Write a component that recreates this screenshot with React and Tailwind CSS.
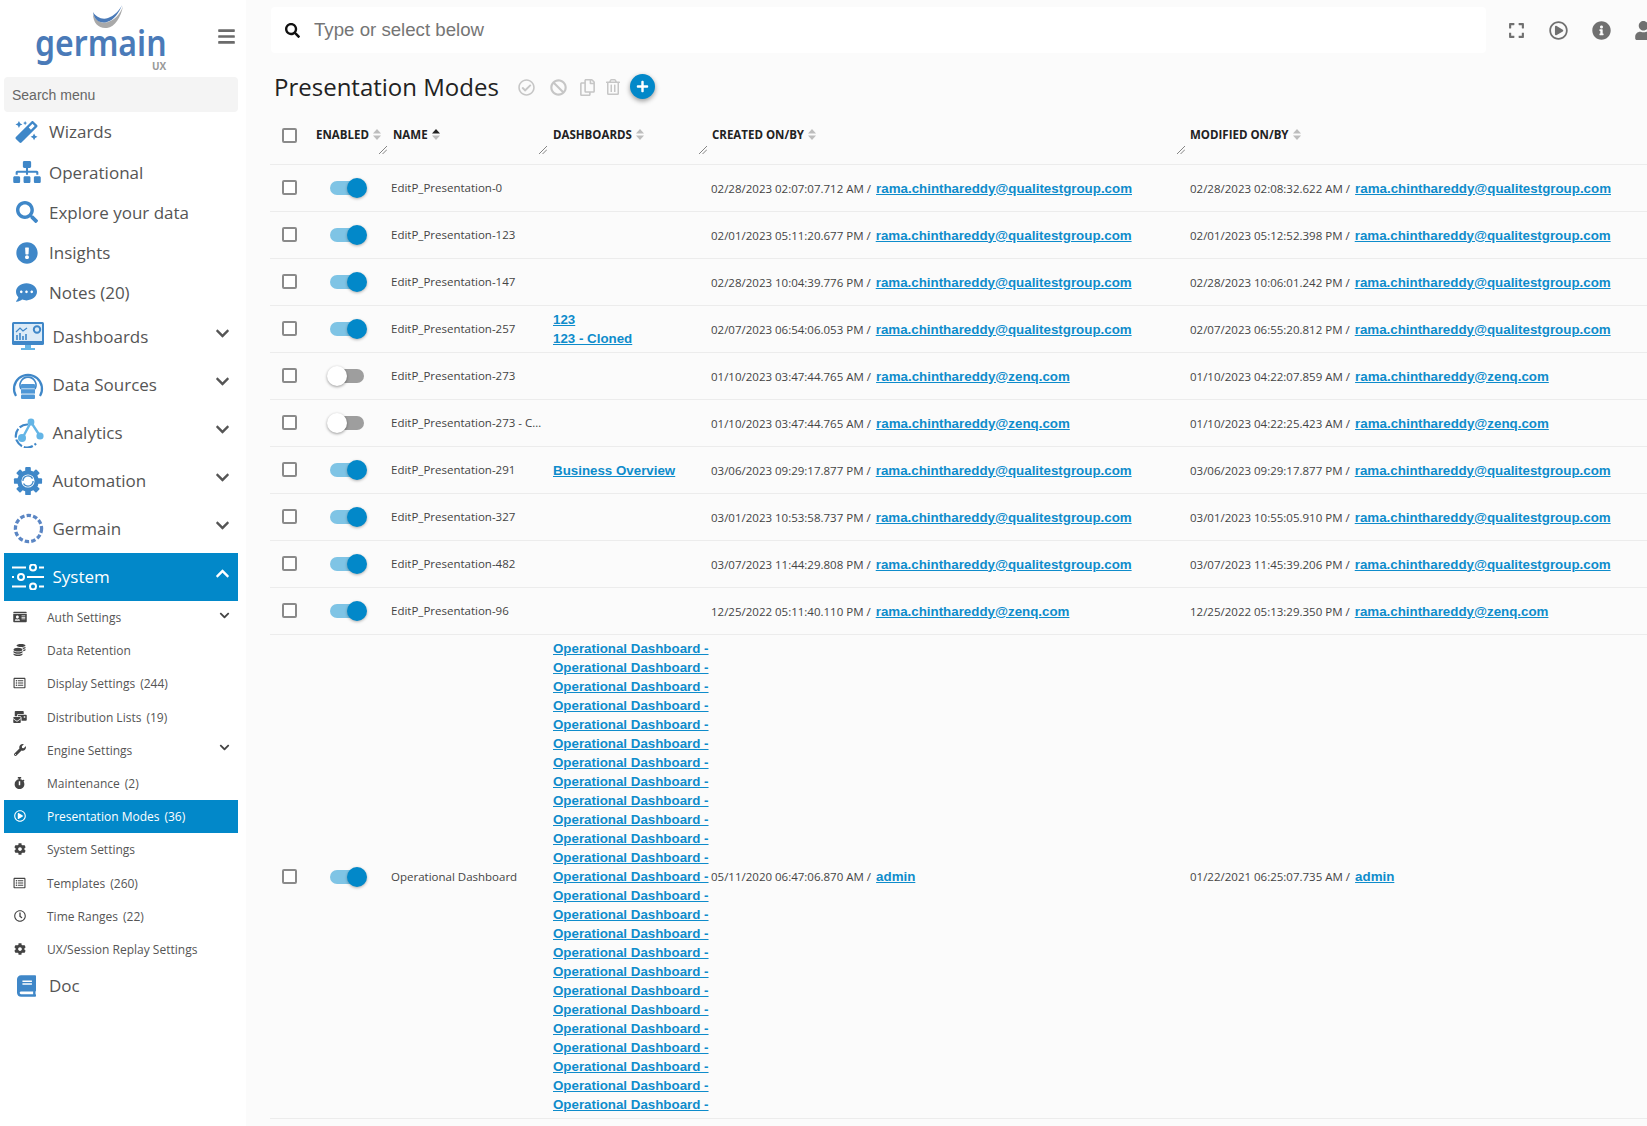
import React from "react";
import {
  FaMagic, FaSitemap, FaSearch, FaExclamationCircle, FaCommentDots, FaBook, FaIdCard, FaCoins, FaRegListAlt,
  FaMailBulk, FaWrench, FaStopwatch, FaRegPlayCircle, FaCog, FaRegClock, FaChevronDown, FaChevronUp,
  FaExpand, FaInfoCircle, FaUser, FaRegCheckCircle, FaBan, FaRegCopy, FaRegTrashAlt, FaPlus, FaBars,
} from "react-icons/fa";

const Q = "rama.chinthareddy@qualitestgroup.com";
const Z = "rama.chinthareddy@zenq.com";

const rows = [
  { name: "EditP_Presentation-0", on: true, c: "02/28/2023 02:07:07.712 AM", cb: Q, m: "02/28/2023 02:08:32.622 AM", mb: Q, d: [] },
  { name: "EditP_Presentation-123", on: true, c: "02/01/2023 05:11:20.677 PM", cb: Q, m: "02/01/2023 05:12:52.398 PM", mb: Q, d: [] },
  { name: "EditP_Presentation-147", on: true, c: "02/28/2023 10:04:39.776 PM", cb: Q, m: "02/28/2023 10:06:01.242 PM", mb: Q, d: [] },
  { name: "EditP_Presentation-257", on: true, c: "02/07/2023 06:54:06.053 PM", cb: Q, m: "02/07/2023 06:55:20.812 PM", mb: Q, d: ["123", "123 - Cloned"] },
  { name: "EditP_Presentation-273", on: false, c: "01/10/2023 03:47:44.765 AM", cb: Z, m: "01/10/2023 04:22:07.859 AM", mb: Z, d: [] },
  { name: "EditP_Presentation-273 - Cloned", on: false, c: "01/10/2023 03:47:44.765 AM", cb: Z, m: "01/10/2023 04:22:25.423 AM", mb: Z, d: [] },
  { name: "EditP_Presentation-291", on: true, c: "03/06/2023 09:29:17.877 PM", cb: Q, m: "03/06/2023 09:29:17.877 PM", mb: Q, d: ["Business Overview"] },
  { name: "EditP_Presentation-327", on: true, c: "03/01/2023 10:53:58.737 PM", cb: Q, m: "03/01/2023 10:55:05.910 PM", mb: Q, d: [] },
  { name: "EditP_Presentation-482", on: true, c: "03/07/2023 11:44:29.808 PM", cb: Q, m: "03/07/2023 11:45:39.206 PM", mb: Q, d: [] },
  { name: "EditP_Presentation-96", on: true, c: "12/25/2022 05:11:40.110 PM", cb: Z, m: "12/25/2022 05:13:29.350 PM", mb: Z, d: [] },
  { name: "Operational Dashboard", on: true, c: "05/11/2020 06:47:06.870 AM", cb: "admin", m: "01/22/2021 06:25:07.735 AM", mb: "admin", d: Array(25).fill("Operational Dashboard -") },
];

const DashIcon = () => (
  <svg viewBox="0 0 32 30" className="w-8 h-[30px]">
    <rect x="0" y="0" width="32" height="23" rx="1.5" fill="#3f87c8" />
    <rect x="2" y="2" width="28" height="17" fill="#dcebf7" />
    <path d="M4 10l4-4 3 3 4-3" fill="none" stroke="#3f87c8" strokeWidth="1.2" />
    <path d="M5 18v-5M8 18v-7M11 18v-4M14 18v-6" stroke="#3f87c8" strokeWidth="1.6" />
    <circle cx="25" cy="7.5" r="3.2" fill="none" stroke="#3f87c8" strokeWidth="2" />
    <path d="M13 23h6v3h-6zM9 26h14v2H9z" fill="#64b5e6" />
  </svg>
);
const DataIcon = () => (
  <svg viewBox="0 0 32 30" className="w-8 h-[30px]">
    <path d="M4 26a14 14 0 1 1 24 0" fill="none" stroke="#3f87c8" strokeWidth="2.2" />
    <path d="M9 19a8 8 0 1 1 14 0" fill="none" stroke="#3f87c8" strokeWidth="1.6" />
    <rect x="9" y="14" width="14" height="4.4" rx="1" fill="#4f97d6" />
    <rect x="9" y="19.2" width="14" height="4.4" fill="#4f97d6" />
    <rect x="9" y="24.4" width="14" height="4.6" rx="1" fill="#4f97d6" />
  </svg>
);
const AnalyticsIcon = () => (
  <svg viewBox="0 0 32 30" className="w-8 h-[30px]">
    <path d="M16 6.500a11.500 11.500 0 1 0 8 19" fill="none" stroke="#3f87c8" strokeWidth="2.2" strokeDasharray="9 2" />
    <path d="M11 19L19 4l9 14" fill="none" stroke="#64b5e6" strokeWidth="2.4" />
    <circle cx="19" cy="4" r="3.4" fill="#64b5e6" />
    <circle cx="10" cy="20" r="4" fill="#64b5e6" />
    <circle cx="28" cy="18" r="3.6" fill="#64b5e6" />
  </svg>
);
const AutoIcon = () => (
  <svg viewBox="0 0 32 32" className="w-[30px] h-[30px]">
    <g fill="#3f87c8">
      <circle cx="16" cy="16" r="11.500" />
      <rect x="13" y="1" width="6" height="6" rx="1" />
      <rect x="13" y="25" width="6" height="6" rx="1" />
      <rect x="1" y="13" width="6" height="6" rx="1" />
      <rect x="25" y="13" width="6" height="6" rx="1" />
      <rect x="13" y="1" width="6" height="6" rx="1" transform="rotate(45 16 16)" />
      <rect x="13" y="25" width="6" height="6" rx="1" transform="rotate(45 16 16)" />
      <rect x="1" y="13" width="6" height="6" rx="1" transform="rotate(45 16 16)" />
      <rect x="25" y="13" width="6" height="6" rx="1" transform="rotate(45 16 16)" />
    </g>
    <circle cx="16" cy="16" r="7" fill="#fff" />
    <circle cx="16" cy="16" r="5.500" fill="none" stroke="#3f87c8" strokeWidth="1.4" strokeDasharray="14 3" />
  </svg>
);
const GermainIcon = () => (
  <svg viewBox="0 0 32 32" className="w-[31px] h-[31px]">
    <circle cx="16" cy="16" r="13.5" fill="none" stroke="#5b86c4" strokeWidth="3.4" strokeDasharray="4.6 2.2" />
  </svg>
);
const SystemIcon = () => (
  <svg viewBox="0 0 32 26" className="w-8 h-[26px]" fill="none" stroke="#fff" strokeWidth="2">
    <path d="M0 3.500h14M27 3.500h5M15 13h17M0 22.500h14M27 22.500h5" />
    <circle cx="21" cy="3.500" r="3" />
    <circle cx="9" cy="13" r="3" />
    <circle cx="21" cy="22.500" r="3" />
    <path d="M0 13h2" />
  </svg>
);

const Top = ({ icon, label }) => (
  <div className="flex items-center h-[40.2px] text-[17px] text-[#555]">
    <span className="w-[45px] flex justify-center shrink-0 text-[#3f87c8]">{icon}</span>
    <span>{label}</span>
  </div>
);

const Big = ({ icon, label, active }) => (
  <div className={`flex items-center h-[48px] text-[17px] ${active ? "bg-[#0288c9] text-white" : "text-[#555]"}`}>
    <span className="w-[48.500px] flex justify-center shrink-0">{icon}</span>
    <span className="flex-1">{label}</span>
    <span className="pr-[8px] pb-[7px]">
      {active ? <FaChevronUp className="w-[15px] h-[15px] text-white" /> : <FaChevronDown className="w-[15px] h-[15px] text-[#555]" />}
    </span>
  </div>
);

const Sub = ({ icon, label, count, chevron, active }) => (
  <div className={`flex items-center h-[33.200px] text-[12px] ${active ? "bg-[#0288c9] text-white" : "text-[#555] pt-[1px]"}`}>
    <span className={`w-[43px] pr-[12px] flex justify-center shrink-0 pb-[2px] ${active ? "text-white" : "text-[#444]"}`}>{icon}</span>
    <span className="flex-1 whitespace-nowrap">
      {label}
      {count && <span className="ml-[5px]">{count}</span>}
    </span>
    {chevron && (
      <span className="pr-[8px] pb-[6px]">
        <FaChevronDown className="w-[11px] h-[11px] text-[#444]" />
      </span>
    )}
  </div>
);

const Checkbox = () => <span className="block w-[15px] h-[15px] border-2 border-[#8a8a8a] rounded-[2px] bg-white" />;

const Toggle = ({ on }) => (
  <span className={`relative block w-[34px] h-[14px] rounded-full ${on ? "bg-[#7fc4e5]" : "bg-[#9e9e9e]"}`}>
    {on ? (
      <span className="absolute left-[17px] top-[-3px] w-[20px] h-[20px] rounded-full bg-[#0288c9] shadow-[0_1px_3px_rgba(0,0,0,0.3)]" />
    ) : (
      <span className="absolute left-[-3px] top-[-3px] w-[20px] h-[20px] rounded-full bg-white shadow-[0_1px_3px_rgba(0,0,0,0.4)]" />
    )}
  </span>
);

const Sort = ({ up }) => (
  <svg viewBox="0 0 8 11" className="w-[8px] h-[11px] ml-[4px] shrink-0">
    <path d="M4 0l4 4.500H0z" fill={up ? "#222" : "#bdbdbd"} />
    <path d="M4 11L0 6.500h8z" fill="#bdbdbd" />
  </svg>
);

const Grip = () => (
  <svg viewBox="0 0 9 9" className="absolute right-0 bottom-[10px] w-[8px] h-[8px]" stroke="#555" strokeWidth="0.8">
    <path d="M0 9L9 0M4 9L9 4" />
  </svg>
);

const Link = ({ children }) => (
  <a href="#" className="font-['Liberation_Sans',sans-serif] font-bold text-[13.33px] leading-[19px] text-[#0e8ccb] underline whitespace-nowrap">
    {children}
  </a>
);

const gridCols = "grid grid-cols-[36px_81px_160px_160px_478px_1fr]";

export default function App() {
  return (
    <div className="flex w-[1647px] h-[1126px] overflow-hidden bg-[#fbfbfb] font-['Open_Sans',sans-serif]">
      <aside className="w-[246px] shrink-0 bg-white pl-[4px] pr-[8px]">
        <div className="flex h-[77px]">
          <div className="relative w-[200px] pl-[31px] pt-[29px]">
            <svg viewBox="0 0 32 30" className="absolute left-[87px] top-[5px] w-[34px] h-[30px]">
              <path d="M1 9c0 9 6 15 14 14 8-1 14-11 16-22-3 9-9 14-15 16C9 19 4 16 1 9z" fill="#a9a9a9" />
              <path d="M1 7c1 8 7 12 14 10 7-2 12-9 15-17-3 6-8 11-14 13C10 15 4 12 1 7z" fill="#4a7ab8" />
            </svg>
            <div className="font-['Noto_Sans',sans-serif] font-semibold text-[32px] leading-[30px] text-[#4a7ab8] origin-bottom scale-y-[1.1]">germain</div>
            <div className="absolute left-[148px] top-[60px] text-[10px] font-bold leading-[12px] text-[#999]">UX</div>
          </div>
          <div className="pt-[27px] pl-[14px]">
            <FaBars className="w-[17px] h-[19px] text-[#6b6b6b]" />
          </div>
        </div>
        <div className="h-[35px] rounded-[4px] bg-[#f4f4f4] flex items-center pl-[8px] pt-[1px] font-['Liberation_Sans',sans-serif] text-[14px] text-[#666]">Search menu</div>
        <Top icon={<FaMagic className="w-[23px] h-[22px]" />} label="Wizards" />
        <Top icon={<FaSitemap className="w-[28px] h-[22px]" />} label="Operational" />
        <Top icon={<FaSearch className="w-[22px] h-[22px]" />} label="Explore your data" />
        <Top icon={<FaExclamationCircle className="w-[22px] h-[22px]" />} label="Insights" />
        <Top icon={<FaCommentDots className="w-[23px] h-[21px]" />} label="Notes (20)" />
        <Big icon={<DashIcon />} label="Dashboards" />
        <Big icon={<DataIcon />} label="Data Sources" />
        <Big icon={<AnalyticsIcon />} label="Analytics" />
        <Big icon={<AutoIcon />} label="Automation" />
        <Big icon={<GermainIcon />} label="Germain" />
        <Big icon={<SystemIcon />} label="System" active />
        <Sub icon={<FaIdCard className="w-[14px] h-[12px]" />} label="Auth Settings" chevron />
        <Sub icon={<FaCoins className="w-[13px] h-[12px]" />} label="Data Retention" />
        <Sub icon={<FaRegListAlt className="w-[13px] h-[12px]" />} label="Display Settings" count="(244)" />
        <Sub icon={<FaMailBulk className="w-[14px] h-[12px]" />} label="Distribution Lists" count="(19)" />
        <Sub icon={<FaWrench className="w-[12px] h-[12px]" />} label="Engine Settings" chevron />
        <Sub icon={<FaStopwatch className="w-[11px] h-[12px]" />} label="Maintenance" count="(2)" />
        <Sub icon={<FaRegPlayCircle className="w-[12px] h-[12px]" />} label="Presentation Modes" count="(36)" active />
        <Sub icon={<FaCog className="w-[12px] h-[12px]" />} label="System Settings" />
        <Sub icon={<FaRegListAlt className="w-[13px] h-[12px]" />} label="Templates" count="(260)" />
        <Sub icon={<FaRegClock className="w-[12px] h-[12px]" />} label="Time Ranges" count="(22)" />
        <Sub icon={<FaCog className="w-[12px] h-[12px]" />} label="UX/Session Replay Settings" />
        <div className="flex items-center h-[40px] text-[17px] text-[#555]">
          <span className="w-[45px] flex justify-center shrink-0"><FaBook className="w-[19px] h-[22px] text-[#3f87c8]" /></span>
          <span>Doc</span>
        </div>
      </aside>

      <main className="flex-1 min-w-0 pt-[7px]">
        <div className="flex items-center h-[46px] pl-[25px]">
          <div className="w-[1215px] shrink-0 h-[46px] rounded-[4px] bg-white flex items-center pl-[14px] font-['Liberation_Sans',sans-serif] text-[18.67px] text-[#757575]">
            <FaSearch className="w-[15px] h-[15px] text-[#111] mr-[14px]" />
            <span>Type or select below</span>
          </div>
          <div className="flex items-center ml-[22px] text-[#707070]">
            <FaExpand className="w-[17px] h-[17px]" />
            <FaRegPlayCircle className="w-[19px] h-[19px] ml-[24px] shrink-0" />
            <FaInfoCircle className="w-[19px] h-[19px] ml-[24px] shrink-0" />
            <FaUser className="w-[19px] h-[19px] ml-[23px] shrink-0" />
          </div>
        </div>

        <div className="flex items-center h-[60px] pl-[28px] pt-[8px]">
          <h1 className="text-[24px] font-normal text-[#222]">Presentation Modes</h1>
          <div className="flex items-center ml-[19px] text-[#c6c6c6]">
            <FaRegCheckCircle className="w-[17px] h-[17px]" />
            <FaBan className="w-[17px] h-[17px] ml-[15px]" />
            <FaRegCopy className="w-[15px] h-[17px] ml-[13px]" />
            <FaRegTrashAlt className="w-[14px] h-[16px] ml-[11px]" />
            <span className="w-[25px] h-[25px] ml-[10px] mb-[2px] rounded-full bg-[#0288c9] flex items-center justify-center shadow-[0_2px_5px_rgba(0,0,0,0.4)]">
              <FaPlus className="w-[13px] h-[13px] text-white" />
            </span>
          </div>
        </div>

        <div className="ml-[24px]">
          <div className={`${gridCols} h-[52px] items-center border-b border-[#ececec] text-[11.5px] font-bold text-[#222]`}>
            <div className="pl-[12px] pb-[6px]"><Checkbox /></div>
            <div className="relative h-full flex items-center pl-[10px] pb-[8px]">ENABLED<Sort /><Grip /></div>
            <div className="relative h-full flex items-center pl-[6px] pb-[8px]">NAME<Sort up /><Grip /></div>
            <div className="relative h-full flex items-center pl-[6px] pb-[8px]">DASHBOARDS<Sort /><Grip /></div>
            <div className="relative h-full flex items-center pl-[5px] pb-[8px]">CREATED ON/BY<Sort /><Grip /></div>
            <div className="h-full flex items-center pl-[5px] pb-[8px]">MODIFIED ON/BY<Sort /></div>
          </div>
          {rows.map((r, i) => (
            <div key={i} className={`${gridCols} items-center border-b border-[#ececec] text-[11.5px] text-[#444] ${r.d.length > 20 ? "py-[4px]" : "h-[47px]"}`}>
              <div className="pl-[12px] pb-[1px]"><Checkbox /></div>
              <div className="pl-[24px]"><Toggle on={r.on} /></div>
              <div className="pl-[4px] pr-[4px] truncate">{r.name}</div>
              <div className="pl-[6px] flex flex-col items-start">
                {r.d.map((t, j) => <Link key={j}>{t}</Link>)}
              </div>
              <div className="pl-[4px] whitespace-nowrap">{r.c} / <span className="ml-[2px]"><Link>{r.cb}</Link></span></div>
              <div className="pl-[5px] whitespace-nowrap">{r.m} / <span className="ml-[2px]"><Link>{r.mb}</Link></span></div>
            </div>
          ))}
        </div>
      </main>
    </div>
  );
}
